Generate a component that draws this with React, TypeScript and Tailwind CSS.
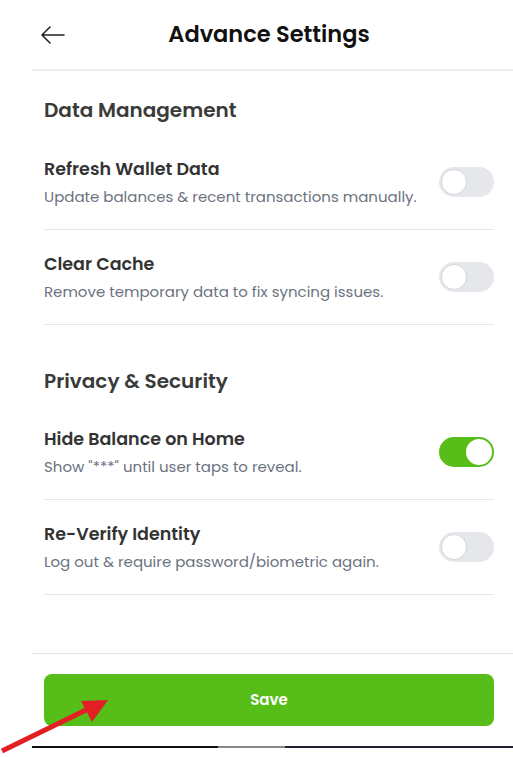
import React, { useState } from "react";

const font = { fontFamily: "Poppins, 'Open Sans', 'Noto Sans', sans-serif" };

function Toggle({ on, onClick }: { on: boolean; onClick: () => void }) {
  return (
    <button
      onClick={onClick}
      className={`relative h-[30px] w-[55px] shrink-0 rounded-full p-[2px] ${on ? "bg-[#57bd18]" : "bg-[#e5e7eb]"}`}
    >
      <span
        className={`block h-[26px] w-[26px] rounded-full bg-white ${on ? "ml-[25px]" : "ml-0 border border-[#d1d5db]"}`}
      />
    </button>
  );
}

function Row({ title, desc, on, onClick }: { title: string; desc: string; on: boolean; onClick: () => void }) {
  return (
    <div className="flex items-center justify-between border-b border-[#e5e7eb] pt-[22px] pb-[22px]">
      <div className="flex flex-col">
        <div className="text-[17.5px] font-semibold leading-[24px] text-[#333333]">{title}</div>
        <div className="mt-[6px] text-[15px] leading-[20px] text-[#6b7280]">{desc}</div>
      </div>
      <Toggle on={on} onClick={onClick} />
    </div>
  );
}

export default function App() {
  const [s, setS] = useState([false, false, true, false]);
  const t = (i: number) => () => setS((p) => p.map((v, j) => (j === i ? !v : v)));
  return (
    <div className="relative h-[757px] w-[513px] overflow-hidden bg-white" style={font}>
      <div className="ml-[32px] flex h-full flex-col">
        <header className="flex h-[71px] items-center border-b-2 border-[#ececec] pr-[7px]">
          <button className="ml-[8px] flex h-[26px] w-[26px] items-center justify-center text-[#222]">
            <svg width="26" height="20" viewBox="0 0 26 20" fill="none" stroke="currentColor" strokeWidth="1.6" strokeLinecap="round" strokeLinejoin="round">
              <path d="M24 10H2M10 2L2 10L10 18" />
            </svg>
          </button>
          <h1 className="flex-1 pr-[34px] text-center text-[22.5px] font-semibold text-[#111]">Advance Settings</h1>
        </header>

        <main className="flex flex-1 flex-col pl-[12px] pr-[19px]">
          <h2 className="mt-[25px] mb-[11px] text-[20px] font-semibold leading-[28px] text-[#3a3a3a]">Data Management</h2>
          <Row title="Refresh Wallet Data" desc="Update balances & recent transactions manually." on={s[0]} onClick={t(0)} />
          <Row title="Clear Cache" desc="Remove temporary data to fix syncing issues." on={s[1]} onClick={t(1)} />
          <h2 className="mt-[42px] mb-[10px] text-[20px] font-semibold leading-[28px] text-[#3a3a3a]">Privacy & Security</h2>
          <Row title="Hide Balance on Home" desc={'Show "***" until user taps to reveal.'} on={s[2]} onClick={t(2)} />
          <Row title="Re-Verify Identity" desc="Log out & require password/biometric again." on={s[3]} onClick={t(3)} />
        </main>

        <div className="border-t border-[#e5e5e5] pt-[20px] pb-[20px] pl-[12px] pr-[19px]">
          <button className="h-[52px] w-full rounded-[8px] bg-[#57bd18] text-[15px] font-semibold text-white">Save</button>
        </div>
        <div className="flex h-[11px] flex-col">
          <div className="flex h-[2px]">
            <div className="w-[186px] bg-[#111]" />
            <div className="w-[67px] bg-[#8a8580]" />
            <div className="flex-1 bg-[#1f2233]" />
          </div>
        </div>
      </div>

      <svg className="pointer-events-none absolute left-0 top-[695px]" width="115" height="62" viewBox="0 0 115 62">
        <path d="M2 56 L88 14" stroke="#e31e24" strokeWidth="5" strokeLinecap="butt" />
        <path d="M108 5 L81 6 L92 27 Z" fill="#e31e24" />
      </svg>
    </div>
  );
}
